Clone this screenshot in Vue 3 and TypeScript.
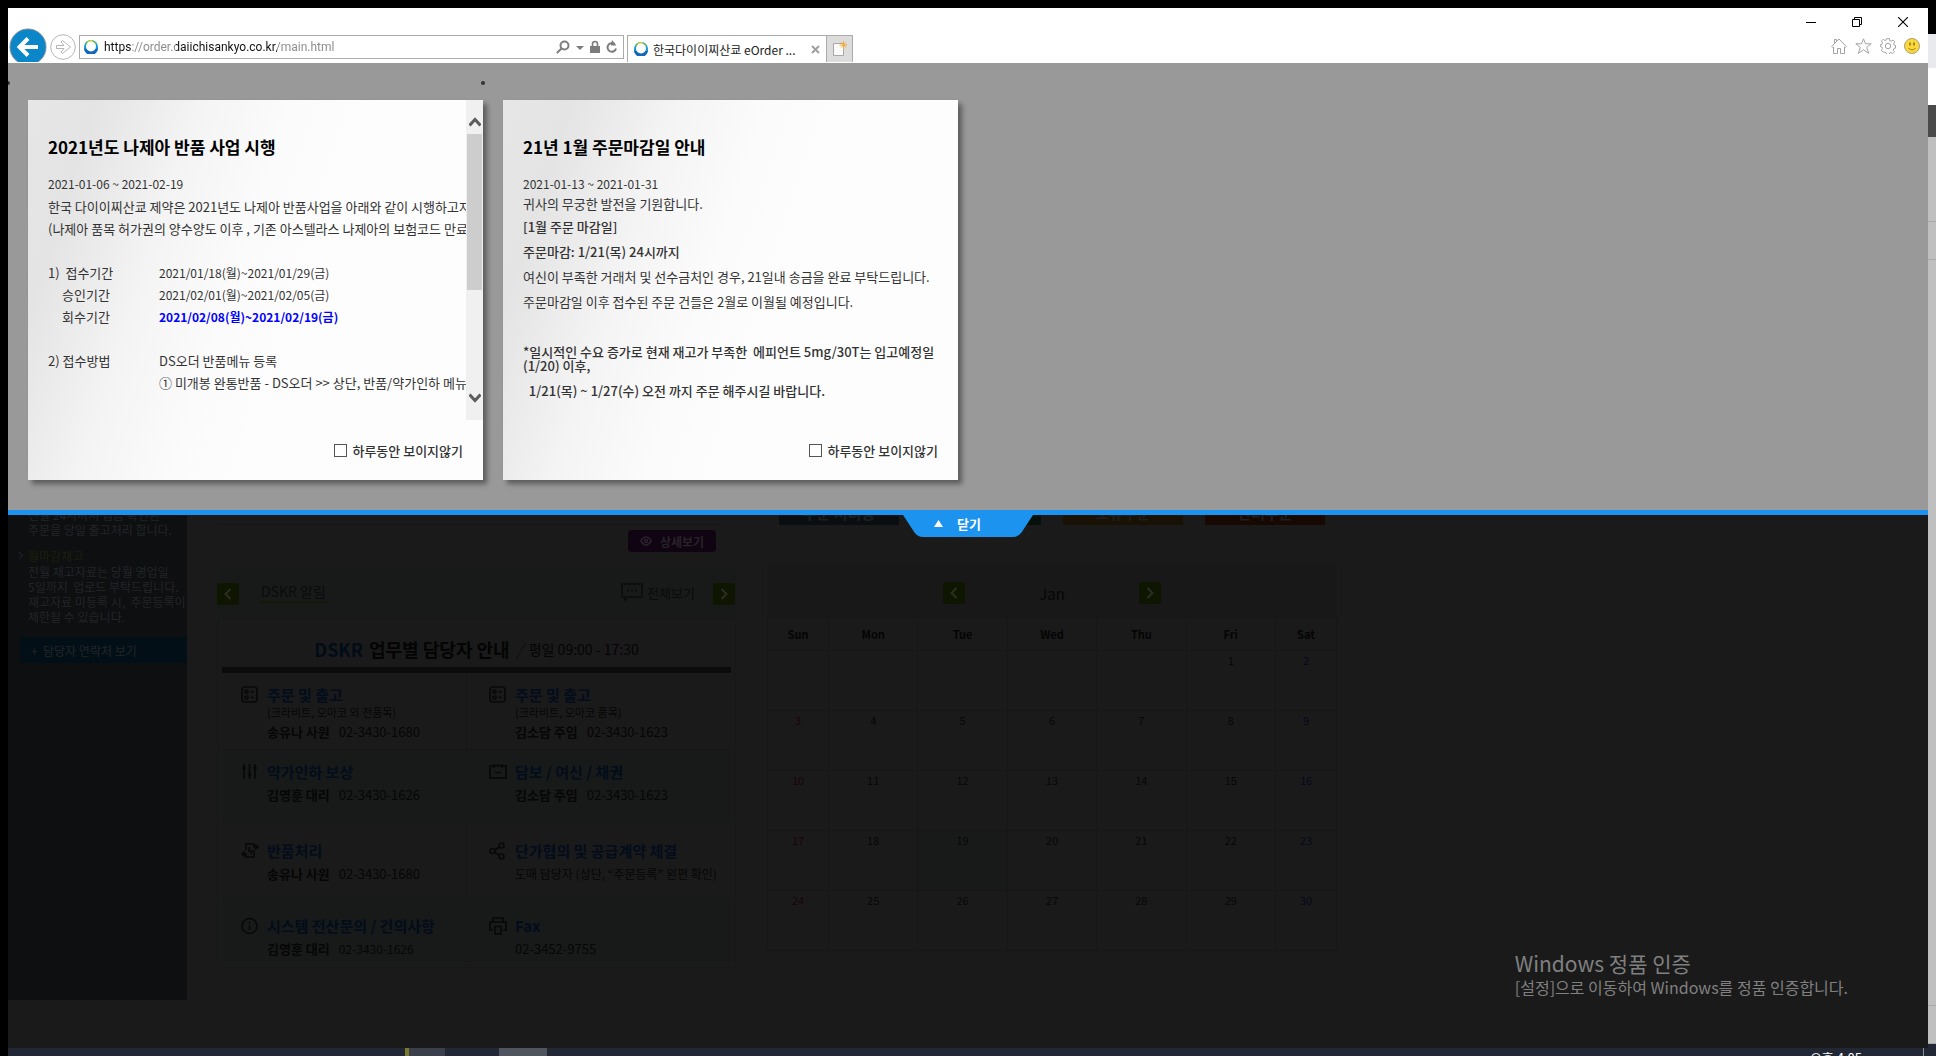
<script setup lang="ts">
import { ref } from 'vue'

interface Contact {
  icon: string
  title: string
  note?: string
  person?: string
  phone?: string
  narrow?: boolean
}

const address = ref('https://order.daiichisankyo.co.kr/main.html')
const hideFirst = ref(false)
const hideSecond = ref(false)

const contacts: Contact[] = [
  { icon: 'list', title: '주문 및 출고', note: '(크라비트, 오마코 외 전품목)', person: '송유나 사원', phone: '02-3430-1680' },
  { icon: 'list', title: '주문 및 출고', note: '(크라비트, 오마코 품목)', person: '김소담 주임', phone: '02-3430-1623' },
  { icon: 'sliders', title: '약가인하 보상', person: '김영훈 대리', phone: '02-3430-1626' },
  { icon: 'board', title: '담보 / 여신 / 채권', person: '김소담 주임', phone: '02-3430-1623' },
  { icon: 'swap', title: '반품처리', person: '송유나 사원', phone: '02-3430-1680' },
  { icon: 'share', title: '단가협의 및 공급계약 체결', phone: '도매 담당자 (상단, “주문등록” 왼편 확인)', narrow: true },
  { icon: 'info', title: '시스템 전산문의 / 건의사항', person: '김영훈 대리', phone: '02-3430-1626', narrow: true },
  { icon: 'print', title: 'Fax', phone: '02-3452-9755' },
]

const weekdays = ['Sun', 'Mon', 'Tue', 'Wed', 'Thu', 'Fri', 'Sat']
const weeks: (number | null)[][] = [
  [null, null, null, null, null, 1, 2],
  [3, 4, 5, 6, 7, 8, 9],
  [10, 11, 12, 13, 14, 15, 16],
  [17, 18, 19, 20, 21, 22, 23],
  [24, 25, 26, 27, 28, 29, 30],
]
const today = 19

const tiles = [
  { name: '주문 처리중', tone: 'slate' },
  { name: '', tone: 'green' },
  { name: '보류주문', tone: 'amber' },
  { name: '반려주문', tone: 'rust' },
]
</script>

<template>
  <div class="desktop">
    <div class="screen">
      <div class="window">
        <header class="chrome">
          <div class="nav">
            <button class="back" aria-label="뒤로">
              <svg width="38" height="34" viewBox="0 0 38 34">
                <circle cx="19" cy="19" r="18" fill="#0a86c9" stroke="#7b8e9a" />
                <path d="M29 19H11M19 10.5 10.5 19l8.500 8.500" fill="none" stroke="#fff" stroke-width="4" />
              </svg>
            </button>
            <button class="forward" aria-label="앞으로">
              <svg width="26" height="26" viewBox="0 0 26 26" fill="none" stroke="#b5b5b5">
                <circle cx="13" cy="13" r="12.300" />
                <path d="M6.500 11.500h7.500l-3-3.500 1.500-1.500L20.500 13l-8 6.500L11 18l3-3.500H6.500z" />
              </svg>
            </button>
            <div class="address">
              <svg class="fav" width="14" height="14" viewBox="0 0 14 14">
                <circle cx="7" cy="7" r="7" fill="#1497dc" />
                <path d="M1 4A7 7 0 0 1 13 4L11 5H3z" fill="#6cc04a" />
                <path d="M3 2A7 7 0 0 1 8 0L9 3H5z" fill="#d9dc2c" />
                <path d="M0 8a7 7 0 0 0 14 0l-2 1H2z" fill="#1268b8" />
                <circle cx="7" cy="6.500" r="5" fill="#fff" />
              </svg>
              <input v-model="address" class="url" type="text" aria-label="주소" />
              <button aria-label="검색">
                <svg width="14" height="14" viewBox="0 0 14 14" fill="none" stroke="#7d7d7d" stroke-width="2">
                  <circle cx="8.500" cy="5.500" r="4" /><path d="M5.500 8.500.8 13" />
                </svg>
              </button>
              <button aria-label="검색 옵션"><svg width="8" height="14" viewBox="0 0 8 14"><path d="M0 6h8L4 10z" fill="#7d7d7d" /></svg></button>
              <button aria-label="보안">
                <svg width="10" height="14" viewBox="0 0 10 14"><rect y="6" width="10" height="7" fill="#7d7d7d" /><path d="M2.500 6V4a2.500 2.500 0 0 1 5 0v2" fill="none" stroke="#7d7d7d" stroke-width="1.600" /></svg>
              </button>
              <button aria-label="새로 고침">
                <svg width="12" height="14" viewBox="0 0 12 14"><path d="M8.500 4A4.300 4.300 0 1 0 10 8.500" fill="none" stroke="#7d7d7d" stroke-width="2" /><path d="M6 0 10.500 5.500H5z" fill="#7d7d7d" /></svg>
              </button>
            </div>
            <div class="tab">
              <svg class="fav" width="14" height="14" viewBox="0 0 14 14">
                <circle cx="7" cy="7" r="7" fill="#1497dc" />
                <path d="M1 4A7 7 0 0 1 13 4L11 5H3z" fill="#6cc04a" />
                <path d="M3 2A7 7 0 0 1 8 0L9 3H5z" fill="#d9dc2c" />
                <path d="M0 8a7 7 0 0 0 14 0l-2 1H2z" fill="#1268b8" />
                <circle cx="7" cy="6.500" r="5" fill="#fff" />
              </svg>
              <span class="tab-name">한국다이이찌산쿄 eOrder ...</span>
              <button aria-label="탭 닫기">
                <svg width="9" height="9" viewBox="0 0 9 9"><path d="m1 1 7 7M8 1 1 8" stroke="#a0a0a0" stroke-width="2" /></svg>
              </button>
            </div>
            <button class="newtab" aria-label="새 탭">
              <svg width="14" height="16" viewBox="0 0 14 16">
                <path d="M.5 2.500h10v12H.5z" fill="#fafafa" stroke="#a8a8a8" />
                <path d="M10.500 0v8M6.500 4h8M8 1.500l5 5M13 1.500l-5 5" stroke="#f2a930" />
              </svg>
            </button>
          </div>
          <div class="controls">
            <div class="winbuttons">
              <button aria-label="최소화"><svg width="10" height="10" viewBox="0 0 10 10"><path d="M0 5.500h10" stroke="#000" /></svg></button>
              <button aria-label="이전 크기로 복원"><svg width="10" height="10" viewBox="0 0 10 10" fill="none" stroke="#000"><path d="M.5 2.500h7v7h-7zM2.500 2.500v-2h7v7h-2" /></svg></button>
              <button aria-label="닫기"><svg width="10" height="10" viewBox="0 0 10 10"><path d="m0 0 10 10M10 0 0 10" stroke="#000" stroke-width="1.100" /></svg></button>
            </div>
            <div class="tools">
              <button aria-label="홈">
                <svg width="16" height="16" viewBox="0 0 16 16" fill="#fff" stroke="#a3a3a3"><path d="M.7 8.500 8 1l7.300 7.500-1 1L13.500 9v6.500h-4v-5h-3v5h-4V9l-.8.500zM3.500 5.500v-4h2V3.500" /></svg>
              </button>
              <button aria-label="즐겨찾기">
                <svg width="17" height="16" viewBox="0 0 17 16" fill="#fff" stroke="#a3a3a3"><path d="m8.500.8 2 5h5.700l-4.500 3.600 2 6-5.200-3.600-5.200 3.600 2-6L.8 5.800h5.700z" /></svg>
              </button>
              <button aria-label="도구">
                <svg width="16" height="16" viewBox="0 0 16 16" fill="#fff" stroke="#a3a3a3"><path d="M6.700.6h2.600l.4 2 1.500.7 1.800-1.200 1.800 1.800-1.200 1.800.6 1.400 1.300.4v2.600l-1.600.5-.6 1.500 1.200 1.700-1.800 1.800-1.800-1.200-1.400.6-.3 1.500H6.700l-.4-1.600-1.400-.6L3.100 14l-1.800-1.800 1.200-1.700-.6-1.500-1.400-.4V6.700l1.500-.4.6-1.500L1.400 3.100l1.800-1.800 1.700 1.200 1.400-.6z" /><circle cx="8" cy="8" r="2.700" /></svg>
              </button>
              <button aria-label="의견 보내기">
                <svg width="16" height="16" viewBox="0 0 16 16"><circle cx="8" cy="8" r="7.500" fill="#fbd93a" stroke="#a9a074" /><path d="M6 4.500v3M10 4.500v3" stroke="#8a6d1a" stroke-width="1.500" /><path d="M4.500 10.500q3.500 3 7 0" fill="none" stroke="#a6852a" /></svg>
              </button>
            </div>
          </div>
        </header>

        <section class="notices">
          <ul class="cards">
            <li class="card">
              <div class="scroller">
                <article class="copy">
                  <h2>2021년도 나제아 반품 사업 시행</h2>
                  <time class="period">2021-01-06 ~ 2021-02-19</time>
                  <div class="guide">
                    <p>한국 다이이찌산쿄 제약은 2021년도 나제아 반품사업을 아래와 같이 시행하고자 합니다.</p>
                    <p>(나제아 품목 허가권의 양수양도 이후 , 기존 아스텔라스 나제아의 보험코드 만료)</p>
                    <dl>
                      <dt>1)&nbsp; 접수기간</dt><dd class="num">2021/01/18(월)~2021/01/29(금)</dd>
                      <dt class="sub">승인기간</dt><dd class="num">2021/02/01(월)~2021/02/05(금)</dd>
                      <dt class="sub">회수기간</dt><dd class="num key">2021/02/08(월)~2021/02/19(금)</dd>
                    </dl>
                    <dl>
                      <dt>2) 접수방법</dt><dd>DS오더 반품메뉴 등록</dd>
                      <dt></dt><dd>① 미개봉 완통반품 - DS오더 &gt;&gt; 상단, 반품/약가인하 메뉴 &gt;&gt;</dd>
                    </dl>
                  </div>
                </article>
                <div class="scrollbar">
                  <svg width="12" height="10" viewBox="0 0 12 10"><path d="m.5 8.500 5.500-6 5.500 6" fill="none" stroke="#5c5c5c" stroke-width="3" /></svg>
                  <div class="thumb"></div>
                  <svg width="12" height="10" viewBox="0 0 12 10"><path d="m.5 1.500 5.500 6 5.500-6" fill="none" stroke="#5c5c5c" stroke-width="3" /></svg>
                </div>
              </div>
              <label class="hide"><input v-model="hideFirst" type="checkbox" />하루동안 보이지않기</label>
            </li>
            <li class="card">
              <div class="scroller">
                <article class="copy">
                  <h2>21년 1월 주문마감일 안내</h2>
                  <time class="period">2021-01-13 ~ 2021-01-31</time>
                  <div class="letter">
                    <p class="lead">귀사의 무궁한 발전을 기원합니다.</p>
                    <p><b>[1월 주문 마감일]</b></p>
                    <p><b>주문마감: 1/21(목) 24시까지</b></p>
                    <p>여신이 부족한 거래처 및 선수금처인 경우, 21일내 송금을 완료 부탁드립니다.</p>
                    <p>주문마감일 이후 접수된 주문 건들은 2월로 이월될 예정입니다.</p>
                    <p>&nbsp;</p>
                    <p><b>*일시적인 수요 증가로 현재 재고가 부족한&nbsp; 에피언트 5mg/30T는 입고예정일<br />(1/20) 이후,</b></p>
                    <p><b>&nbsp; 1/21(목) ~ 1/27(수) 오전 까지 주문 해주시길 바랍니다.</b></p>
                  </div>
                </article>
              </div>
              <label class="hide"><input v-model="hideSecond" type="checkbox" />하루동안 보이지않기</label>
            </li>
          </ul>
          <button class="close">
            <svg class="close-shape" width="130" height="22" viewBox="0 0 130 22"><path d="M0 0h130l-11.500 17.500Q115 22 110 22H20q-5 0-8.500-4.500z" fill="#1c94ef" /></svg>
            <svg class="close-mark" width="9" height="7" viewBox="0 0 9 7"><path d="M4.500 0 9 7H0z" fill="#fff" /></svg>
            <span class="close-text">닫기</span>
          </button>
        </section>

        <main class="dash">
          <aside class="side">
            <div class="cut"><span>전월 24시까지 입금 확인된</span></div>
            <p>주문을 당일 출고처리 합니다.</p>
            <h3>월마감재고</h3>
            <p>전월 재고자료는 당월 영업일<br />5일까지&nbsp; 업로드 부탁드립니다.<br />재고자료 미등록 시,&nbsp; 주문등록이<br />제한될 수 있습니다.</p>
            <button class="lookup">+&nbsp; 담당자 연락처 보기</button>
          </aside>

          <section class="board">
            <div class="board-top">
              <button class="detail">
                <svg width="12" height="10" viewBox="0 0 12 10" fill="none" stroke="#2a222d" stroke-width="1.400"><path d="M.7 5Q6-3 11.300 5 6 13 .7 5z" /><circle cx="6" cy="5" r="1.500" /></svg>
                상세보기
              </button>
            </div>
            <div class="board-head">
              <button class="step" aria-label="이전"><svg width="8" height="12" viewBox="0 0 8 12"><path d="M6.500 1 1.500 6l5 5" /></svg></button>
              <h3>DSKR 알림</h3>
              <a class="all" href="#">
                <svg width="22" height="18" viewBox="0 0 22 18"><path d="M1 1h20v13H7l-3 3v-3H1z" fill="none" stroke="#0b0d0c" stroke-width="1.500" /><path d="M6 7.500h2M10 7.500h2M14 7.500h2" stroke="#0b0d0c" stroke-width="2" /></svg>
                전체보기
              </a>
              <button class="step" aria-label="다음"><svg width="8" height="12" viewBox="0 0 8 12"><path d="m1.500 1 5 5-5 5" /></svg></button>
            </div>
            <div class="board-body">
              <h2 class="board-title"><em>DSKR</em> 업무별 담당자 안내 <i>/</i> <span>평일 09:00 - 17:30</span></h2>
              <div class="contacts">
                <div v-for="(c, i) in contacts" :key="i" class="contact">
                  <svg class="ico" width="18" height="18" viewBox="0 0 18 18">
                    <template v-if="c.icon === 'list'"><rect x="1" y="1" width="15" height="15" rx="3" /><circle cx="5.500" cy="5.800" r="1.500" /><circle cx="5.500" cy="11.500" r="1.500" /><path d="M9.500 5.800H13M9.500 11.500H13" /></template>
                    <template v-else-if="c.icon === 'sliders'"><path d="M3 1v15M8.500 1v15M14 1v15" /><circle cx="3" cy="5" r="1" /><circle cx="8.500" cy="12" r="1" /><circle cx="14" cy="5" r="1" /></template>
                    <path v-else-if="c.icon === 'board'" d="M1 3h16v12H1zM5 1v4M9 1v2M13 1v4M6 9.500h6" />
                    <path v-else-if="c.icon === 'swap'" d="M5 8V2h8v3h4M14 2.500 17 5l-3 2.500M13 9v6H5v-3H1M4 9.500 1 12l3 2.500M8 5v4h5M10 12V9" />
                    <template v-else-if="c.icon === 'share'"><circle cx="3.500" cy="9" r="2.500" /><circle cx="12.500" cy="3.500" r="2.500" /><circle cx="12.500" cy="14.500" r="2.500" /><path d="m5.500 8 5-3M5.500 10.300l5 3" /></template>
                    <template v-else-if="c.icon === 'info'"><circle cx="8.500" cy="9" r="7.500" /><path d="M8.500 8v5M8.500 5v1.500" /></template>
                    <path v-else d="M4 5V1h10v4M4 13H1V5h16v8h-3M5 9.500h8M6 10v7h6v-7" />
                  </svg>
                  <div>
                    <h4>{{ c.title }}</h4>
                    <p v-if="c.note" class="note">{{ c.note }}</p>
                    <p class="who"><b v-if="c.person">{{ c.person }}</b><span :class="{ narrow: c.narrow }">{{ c.phone }}</span></p>
                  </div>
                </div>
              </div>
            </div>
          </section>

          <section class="plan">
            <div class="tiles">
              <div v-for="t in tiles" :key="t.tone" class="tile" :class="t.tone"><span v-if="t.name">{{ t.name }}</span></div>
            </div>
            <div class="calendar">
              <div class="month">
                <button class="step" aria-label="이전 달"><svg width="8" height="12" viewBox="0 0 8 12"><path d="M6.500 1 1.500 6l5 5" /></svg></button>
                <span>Jan</span>
                <button class="step" aria-label="다음 달"><svg width="8" height="12" viewBox="0 0 8 12"><path d="m1.500 1 5 5-5 5" /></svg></button>
              </div>
              <table>
                <thead>
                  <tr><th v-for="d in weekdays" :key="d" scope="col">{{ d }}</th></tr>
                </thead>
                <tbody>
                  <tr v-for="(w, i) in weeks" :key="i">
                    <td v-for="(d, j) in w" :key="j" :class="{ today: d === today }">{{ d }}</td>
                  </tr>
                </tbody>
              </table>
            </div>
          </section>
        </main>

        <div class="activation">
          <p class="big">Windows 정품 인증</p>
          <p>[설정]으로 이동하여 Windows를 정품 인증합니다.</p>
        </div>
      </div>
      <div class="behind">
        <div class="b-tabs"></div>
        <div class="b-bar"></div>
        <div class="b-dark"></div>
        <div class="b-row first"></div>
        <div class="b-row second"></div>
        <div class="b-row rest"></div>
        <div class="b-row last"></div>
        <div class="b-task"></div>
      </div>
    </div>
    <footer class="taskbar">
      <div class="task marked"></div>
      <div class="task active"></div>
      <span class="clock">오후 4:05</span>
      <div class="peek"></div>
    </footer>
  </div>
</template>

<style>
body {
  background: #000;
}
</style>

<style scoped>
.desktop {
  display: flex;
  flex-direction: column;
  box-sizing: border-box;
  height: 100vh;
  padding-left: 8px;
  overflow: hidden;
  background: #000;
  font-family: "Noto Sans CJK KR", "Noto Sans", sans-serif;
  font-size: 13px;
  color: #333;
}
h2, h3, h4, p, ul, dl, dd {
  margin: 0;
  padding: 0;
}
button {
  display: flex;
  align-items: center;
  justify-content: center;
  padding: 0;
  border: 0;
  background: none;
  font-family: inherit;
  color: inherit;
}
svg {
  display: block;
  flex: none;
}
.screen {
  display: flex;
  flex: 1;
  min-height: 0;
}
.window {
  position: relative;
  display: flex;
  flex: 1;
  flex-direction: column;
  min-width: 0;
  margin-top: 8px;
  overflow: hidden;
  background: #1a1a1a;
}

/* browser frame */
.chrome {
  display: flex;
  flex: none;
  justify-content: space-between;
  height: 55px;
  background: #fff;
}
.nav {
  display: flex;
  align-items: flex-end;
  padding: 0 0 1px 1px;
}
.back {
  height: 34px;
}
.forward {
  margin: 0 3px 2px 3px;
}
.address {
  display: flex;
  align-items: center;
  box-sizing: border-box;
  width: 545px;
  height: 24px;
  margin-bottom: 3px;
  padding: 0 5px 0 4px;
  border: 1px solid #ababab;
}
.address button {
  margin-left: 6px;
}
.url {
  flex: 1;
  min-width: 0;
  height: 20px;
  margin-left: 6px;
  padding: 0;
  border: 0;
  outline: 0;
  font-family: Roboto, "Noto Sans CJK KR", sans-serif;
  font-size: 12px;
  background: linear-gradient(90deg, #111 0 28px, #888 28px 72px, #111 72px 173px, #888 173px);
  background-clip: text;
  -webkit-text-fill-color: transparent;
}
.tab {
  display: flex;
  align-items: center;
  box-sizing: border-box;
  width: 200px;
  height: 27px;
  margin-left: 3px;
  padding: 0 6px;
  border: 1px solid #ababab;
  border-bottom: 0;
  color: #222;
}
.tab-name {
  flex: 1;
  margin-left: 5px;
  font-size: 12px;
  white-space: nowrap;
}
.newtab {
  width: 26px;
  height: 27px;
  border: 1px solid #ababab;
  border-width: 1px 1px 0 0;
  box-sizing: border-box;
  background: #dcdcdc;
}
.controls {
  padding-right: 8px;
}
.winbuttons {
  display: flex;
  justify-content: flex-end;
  gap: 36px;
  padding: 9px 12px 0 0;
}
.tools {
  display: flex;
  justify-content: flex-end;
  gap: 8px;
  margin-top: 11px;
}

/* notice layer */
.notices {
  position: relative;
  z-index: 1;
  flex: none;
  padding: 37px 20px 30px;
  border-bottom: 5px solid #1c94ef;
  background: #999;
}
.cards {
  display: flex;
  gap: 20px;
  list-style: none;
}
.card {
  position: relative;
  width: 455px;
  background: linear-gradient(108deg, #e6e6e6 0, #e4e4e4 12%, #f4f4f4 30%, #fbfbfb 46%, #fdfdfd 60%);
  box-shadow: 4px 4px 5px rgba(0, 0, 0, 0.4);
}
.card::before {
  content: "";
  position: absolute;
  top: -19px;
  left: -22px;
  width: 4px;
  height: 4px;
  border-radius: 2px;
  background: #333;
}
.scroller {
  display: flex;
  height: 320px;
}
.copy {
  flex: 1;
  min-width: 0;
  padding: 35px 0 0 20px;
  overflow: hidden;
  white-space: nowrap;
}
.copy h2 {
  font-size: 17px;
  line-height: 24px;
  color: #000;
}
.period {
  display: block;
  margin-top: 15px;
  font-size: 12px;
  line-height: 20px;
}
.guide {
  padding-top: 2px;
  line-height: 22px;
}
.guide dl {
  display: grid;
  grid-template-columns: 111px 1fr;
  grid-auto-rows: 22px;
  margin-top: 22px;
}
.sub {
  padding-left: 14px;
}
.num {
  font-size: 12px;
}
.key {
  font-weight: 700;
  color: #00f;
}
.letter {
  padding-top: 3px;
  line-height: 14px;
}
.letter b {
  font-weight: 500;
}
.letter p {
  margin-bottom: 11px;
}
.letter .lead {
  margin-bottom: 9px;
}
.scrollbar {
  display: flex;
  flex-direction: column;
  align-items: center;
  width: 17px;
  padding: 17px 0;
  box-sizing: border-box;
  background: #f0f0f0;
}
.thumb {
  width: 15px;
  height: 156px;
  margin: 7px 0 auto;
  background: #cdcdcd;
}
.hide {
  display: flex;
  align-items: center;
  justify-content: flex-end;
  gap: 5px;
  height: 60px;
  padding: 0 20px 0 0;
  font-weight: 500;
}
.hide input {
  appearance: none;
  box-sizing: border-box;
  width: 13px;
  height: 13px;
  margin: 0;
  border: 1px solid #555;
  background: #fff;
}
.close {
  position: absolute;
  top: 100%;
  left: calc(50% - 65px);
  justify-content: flex-start;
  width: 130px;
  height: 22px;
  margin-top: 5px;
  padding: 0 0 5px 31px;
  gap: 14px;
  font-size: 13px;
  font-weight: 700;
  color: #fff;
}
.close-shape {
  position: absolute;
  inset: 0;
}
.close-mark,
.close-text {
  position: relative;
}

/* dimmed page */
.dash {
  display: flex;
  flex: 1;
  align-items: flex-start;
  min-height: 0;
  overflow: hidden;
}
.side {
  box-sizing: border-box;
  width: 179px;
  height: 485px;
  padding-left: 20px;
  background: #0e0f11;
  font-size: 12px;
  line-height: 15px;
  color: #232528;
  white-space: nowrap;
}
.cut {
  display: flex;
  align-items: flex-end;
  height: 7px;
  overflow: hidden;
}
.side h3 {
  margin: 11px 0 1px;
  font-size: 12px;
  font-weight: 400;
  color: #1a1f0c;
}
.side h3::before {
  content: "";
  float: left;
  width: 4px;
  height: 4px;
  margin: 5px 0 0 -11px;
  border: 1px solid #222426;
  border-width: 1px 1px 0 0;
  transform: rotate(45deg);
}
.lookup {
  justify-content: flex-start;
  width: 167px;
  height: 26px;
  margin: 13px 0 0 -8px;
  padding-left: 11px;
  background: #020f16;
  font-size: 12px;
}
.board {
  width: 519px;
  margin-left: 30px;
}
.board-top {
  display: flex;
  justify-content: flex-end;
  height: 41px;
  margin: 9px 12px 0 0;
  padding-right: 8px;
  border-top: 1px solid #161616;
}
.detail {
  gap: 8px;
  width: 88px;
  height: 22px;
  margin-top: 5px;
  border-radius: 4px;
  background: #100412;
  font-size: 12px;
  font-weight: 700;
  color: #28222a;
}
.board-head {
  display: flex;
  align-items: center;
  height: 52px;
  padding: 0 1px 0 0;
  background: #171a19;
}
.step {
  flex: none;
  width: 22px;
  height: 22px;
  margin-top: 4px;
  border-radius: 2px;
  background: #0e1500;
}
.step path {
  fill: none;
  stroke: #2b2f22;
  stroke-width: 2;
}
.board-head h3 {
  margin-left: 21px;
  padding: 0 1px;
  border-bottom: 2px solid #121a03;
  font-size: 14px;
  line-height: 20px;
  font-weight: 400;
  color: #0a0b0b;
}
.all {
  display: flex;
  align-items: center;
  gap: 4px;
  margin: 0 18px 0 auto;
  font-size: 13px;
  color: #0a0b0b;
  text-decoration: none;
}
.board-body {
  box-sizing: border-box;
  height: 350px;
  padding: 0 4px;
  border: 1px solid #161717;
  border-radius: 4px;
}
.board-title {
  display: flex;
  align-items: center;
  justify-content: center;
  gap: 6px;
  box-sizing: border-box;
  height: 54px;
  padding-top: 13px;
  padding-bottom: 2px;
  border-bottom: 6px solid #0b0b0b;
  font-size: 18px;
  line-height: 24px;
  color: #040404;
}
.board-title em {
  font-style: normal;
  color: #020b18;
}
.board-title i {
  font-weight: 400;
  color: #111;
}
.board-title span {
  font-size: 14px;
  font-weight: 400;
}
.contacts {
  display: grid;
  grid-template-columns: 244px 1fr;
  grid-template-rows: 77px 73px 75px 64px;
}
.contact {
  display: flex;
  gap: 8px;
  padding: 12px 0 0 19px;
  border-bottom: 1px solid #161616;
  color: #060606;
}
.contact:nth-child(even) {
  padding-left: 22px;
  border-left: 1px solid #161616;
}
.contact:nth-child(4n + 3),
.contact:nth-child(4n + 4) {
  background: #171a18;
}
.contact:nth-child(n + 5) {
  padding-top: 18px;
}
.contact:nth-child(n + 7) {
  border-bottom: 0;
}
.ico {
  margin-top: 1px;
  fill: none;
  stroke: #070808;
  stroke-width: 1.6;
}
.contact h4 {
  font-size: 15px;
  line-height: 20px;
  color: #020c1b;
}
.note {
  font-size: 11px;
  line-height: 14px;
}
.who {
  display: flex;
  gap: 9px;
  margin-top: 2px;
  font-size: 13px;
  line-height: 22px;
  white-space: nowrap;
}
.narrow {
  font-size: 12px;
}
.plan {
  margin-left: 31px;
}
.tiles {
  display: flex;
  gap: 22px;
  margin-left: 12px;
}
.tile {
  display: flex;
  align-items: flex-end;
  justify-content: center;
  width: 120px;
  height: 10px;
  overflow: hidden;
  font-size: 15px;
  font-weight: 700;
  line-height: 24px;
  color: #1d1f21;
}
.slate { background: #0b0e11; }
.green { background: #05100b; }
.amber { background: #191204; }
.rust { background: #180802; }
.calendar {
  width: 570px;
  height: 405px;
  margin-top: 39px;
}
.month {
  display: flex;
  align-items: center;
  justify-content: space-between;
  height: 53px;
  padding: 0 176px;
  background: #181818;
  font-size: 15px;
  color: #060606;
}
.month span {
  padding-top: 6px;
}
.calendar table {
  width: 100%;
  border-collapse: collapse;
  table-layout: fixed;
  font-size: 11px;
  text-align: center;
}
.calendar th,
.calendar td {
  padding: 0;
  border: 1px solid #161616;
}
.calendar th {
  height: 32px;
  color: #040404;
}
.calendar th:first-child,
.calendar th:last-child {
  width: 60px;
}
.calendar td {
  height: 57px;
  padding-top: 2px;
  line-height: 14px;
  vertical-align: top;
  color: #070707;
}
.calendar td:first-child {
  color: #1c0308;
}
.calendar td:last-child {
  color: #05081d;
}
.calendar .today {
  background: #171a19;
}
.activation {
  position: absolute;
  right: 80px;
  bottom: 50px;
  font-size: 16px;
  line-height: 22px;
  color: #808080;
}
.activation .big {
  font-size: 21px;
  line-height: 26px;
}

/* edge of the window behind */
.behind {
  display: flex;
  flex: none;
  flex-direction: column;
  width: 8px;
  padding-top: 34px;
}
.b-tabs {
  height: 34px;
  background: #e8eaed;
}
.b-bar {
  height: 37px;
  background: #fff;
}
.b-dark {
  height: 32px;
  background: #4a4a4a;
}
.b-row {
  border-bottom: 1px solid #a9a9a9;
  background: #bfbfbf;
}
.first { height: 84px; }
.second { height: 37px; }
.rest { flex: 1; }
.last { height: 37px; }
.b-task {
  height: 4px;
  background: #222735;
}
.taskbar {
  display: flex;
  flex: none;
  height: 8px;
  overflow: hidden;
  background: #222735;
}
.task {
  width: 36px;
  margin-left: 397px;
  background: #3b3f4c;
}
.marked {
  border-left: 4px solid #7b7a2c;
}
.active {
  width: 48px;
  margin-left: 54px;
  background: #50545f;
}
.clock {
  margin: 1px 61px 0 auto;
  font-size: 13px;
  line-height: 18px;
  color: #fff;
}
.peek {
  width: 12px;
  border-left: 1px solid #8b8e96;
}
</style>
